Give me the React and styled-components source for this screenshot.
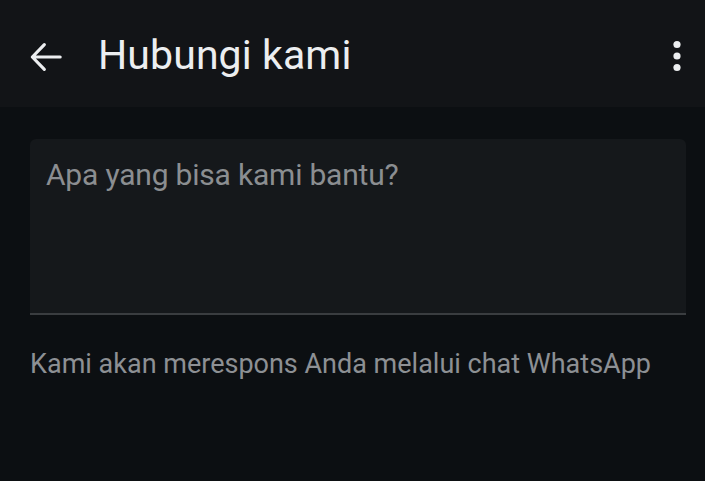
import React from "react";
import styled, { createGlobalStyle } from "styled-components";

const Global = createGlobalStyle`
  html, body { margin: 0; padding: 0; background: #0c0f12; }
  body { font-family: Roboto, "Noto Sans", sans-serif; }
`;

const Page = styled.div`
  width: 705px;
  height: 481px;
  background: #0c0f12;
  display: flex;
  flex-direction: column;
  overflow: hidden;
`;

const TopBar = styled.header`
  height: 107px;
  background: #121417;
  display: flex;
  align-items: center;
  padding: 6px 22px 0 26px;
  box-sizing: border-box;
  flex-shrink: 0;
`;

const IconButton = styled.button`
  background: none;
  border: none;
  padding: 0;
  display: flex;
  align-items: center;
  justify-content: center;
  width: ${(p) => p.$w}px;
  height: 40px;
  color: #eceef0;
  cursor: pointer;
`;

const Title = styled.h1`
  margin: 0 0 0 32px;
  flex: 1;
  font-family: Roboto, sans-serif;
  font-weight: 400;
  font-size: 41px;
  color: #eceef0;
  letter-spacing: 0.1px;
  line-height: 1;
  padding-bottom: 2px;
`;

const Body = styled.main`
  padding: 32px 19px 0 30px;
  display: flex;
  flex-direction: column;
`;

const Field = styled.div`
  height: 176px;
  background: #15181b;
  border-radius: 6px 6px 0 0;
  border-bottom: 2px solid #3a3d40;
  box-sizing: border-box;
  padding: 17px 16px;
`;

const Placeholder = styled.div`
  font-size: 30px;
  color: #8b8e91;
  line-height: 38px;
  letter-spacing: -0.2px;
`;

const Hint = styled.p`
  margin: 32px 0 0;
  font-size: 27px;
  color: #8d9094;
  line-height: 34px;
  letter-spacing: 0;
`;

export default function App() {
  return (
    <Page>
      <Global />
      <TopBar>
        <IconButton $w={40} aria-label="Kembali">
          <svg width="40" height="40" viewBox="0 0 24 24" fill="none">
            <path
              d="M20.5 12H3.8M11 4.6L3.8 12l7.2 7.4"
              stroke="currentColor"
              strokeWidth="1.9"
              strokeLinecap="round"
              strokeLinejoin="round"
            />
          </svg>
        </IconButton>
        <Title>Hubungi kami</Title>
        <IconButton $w={12} aria-label="Menu">
          <svg width="10" height="34" viewBox="0 0 10 34">
            <circle cx="5" cy="4.5" r="3.6" fill="currentColor" />
            <circle cx="5" cy="16" r="3.6" fill="currentColor" />
            <circle cx="5" cy="27.5" r="3.6" fill="currentColor" />
          </svg>
        </IconButton>
      </TopBar>
      <Body>
        <Field>
          <Placeholder>Apa yang bisa kami bantu?</Placeholder>
        </Field>
        <Hint>Kami akan merespons Anda melalui chat WhatsApp</Hint>
      </Body>
    </Page>
  );
}
